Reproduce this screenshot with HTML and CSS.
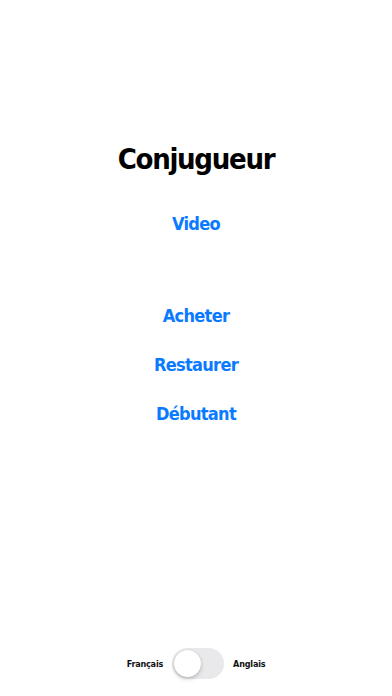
FILE: index.html
```html
<!DOCTYPE html>
<html lang="fr">
<head>
  <meta charset="UTF-8">
  <meta name="viewport" content="width=device-width, initial-scale=1.0">
  <title>Conjugueur</title>
  <link rel="stylesheet" href="styles.css">
</head>
<body>
  <div class="screen">
    <div class="menu">
      <h1 class="title">Conjugueur</h1>
      <a class="link video" href="#">Video</a>
      <a class="link buy" href="#">Acheter</a>
      <a class="link" href="#">Restaurer</a>
      <a class="link" href="#">Débutant</a>
    </div>

    <div class="language">
      <span class="lang-label">Français</span>
      <div class="switch"><div class="knob"></div></div>
      <span class="lang-label">Anglais</span>
    </div>
  </div>
</body>
</html>
```

FILE: styles.css
```css
body {
  margin: 0;
  background-color: #fff;
  font-family: "DejaVu Sans", sans-serif;
  font-stretch: condensed;
  font-weight: bold;
}

.screen {
  width: 392px;
  height: 696px;
  display: flex;
  flex-direction: column;
  align-items: center;
}

.menu {
  display: flex;
  flex-direction: column;
  align-items: center;
  padding-top: 137px;
  flex: 1;
}

.title {
  margin: 0;
  font-size: 29px;
  line-height: 44px;
  color: #000;
  letter-spacing: -1.3px;
}

.link {
  color: #0a7aff;
  text-decoration: none;
  font-size: 18px;
  line-height: 26px;
  letter-spacing: -0.7px;
  margin-top: 23px;
}

.video {
  margin-top: 30px;
}

.buy {
  margin-top: 66px;
}

.language {
  display: flex;
  align-items: center;
  gap: 9px;
  margin-bottom: 17px;
}

.lang-label {
  font-size: 9px;
  letter-spacing: -0.2px;
  color: #111;
}

.switch {
  width: 52px;
  height: 31px;
  border-radius: 16px;
  background-color: #e9e9eb;
  padding: 2px;
  box-sizing: border-box;
}

.knob {
  width: 27px;
  height: 27px;
  border-radius: 50%;
  background-color: #fff;
  box-shadow: 0 2px 4px rgba(0, 0, 0, 0.2), 0 0 1px rgba(0, 0, 0, 0.15);
}
```
